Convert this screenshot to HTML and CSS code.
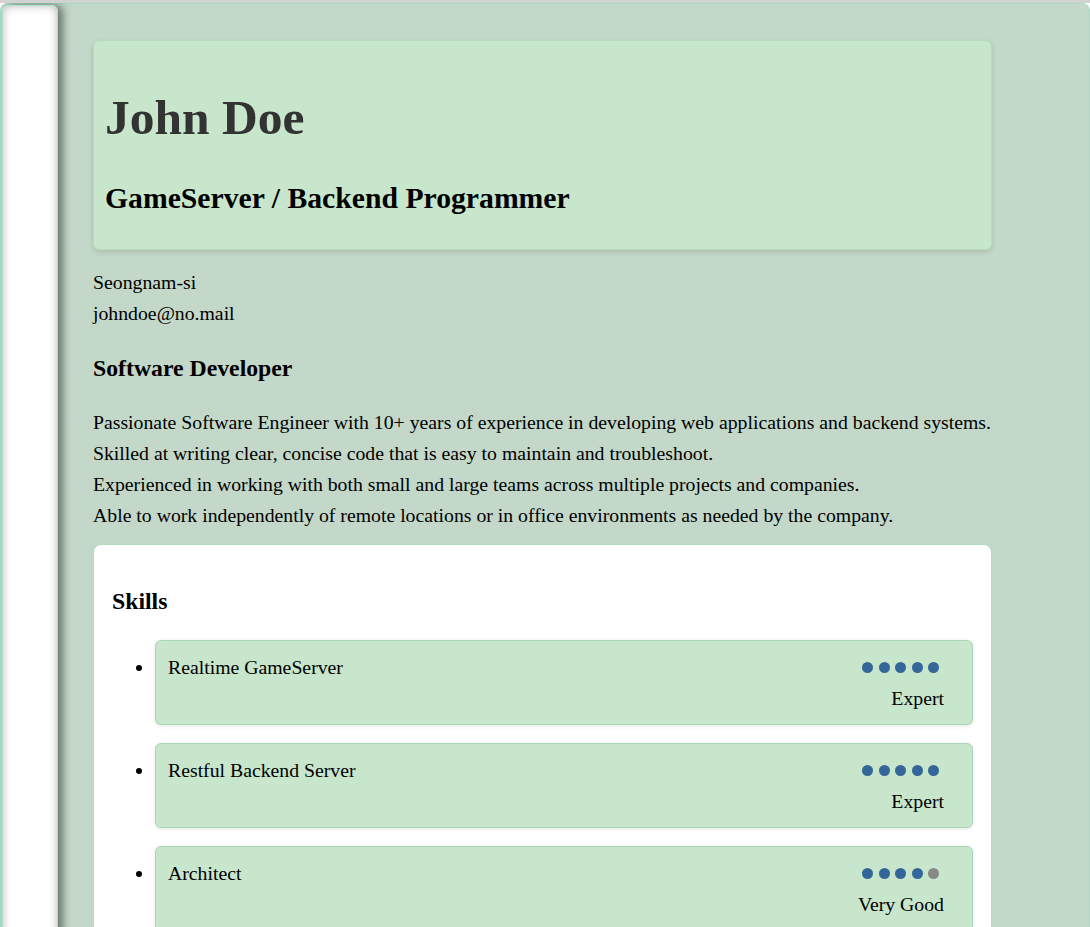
FILE: index.html
```html
<!DOCTYPE html>
<html lang="en">
<head>
<meta charset="utf-8">
<title>John Doe - Resume</title>
<link rel="stylesheet" href="styles.css">
</head>
<body>
<div class="app">
  <aside class="sidebar"></aside>
  <main class="content">
    <header class="hero">
      <h1 class="name">John Doe</h1>
      <h2 class="role">GameServer / Backend Programmer</h2>
    </header>
    <p class="contact">Seongnam-si<br>johndoe@no.mail</p>
    <h3 class="title">Software Developer</h3>
    <p class="summary">Passionate Software Engineer with 10+ years of experience in developing web applications and backend systems.<br>Skilled at writing clear, concise code that is easy to maintain and troubleshoot.<br>Experienced in working with both small and large teams across multiple projects and companies.<br>Able to work independently of remote locations or in office environments as needed by the company.</p>
    <section class="panel">
      <h3 class="panel-title">Skills</h3>
      <ul class="skills">
        <li class="skill">
          <div class="skill-row">
            <span class="skill-name">Realtime GameServer</span>
            <div class="skill-level">
              <div class="dots"><i class="dot on"></i><i class="dot on"></i><i class="dot on"></i><i class="dot on"></i><i class="dot on"></i></div>
              <div class="level">Expert</div>
            </div>
          </div>
        </li>
        <li class="skill">
          <div class="skill-row">
            <span class="skill-name">Restful Backend Server</span>
            <div class="skill-level">
              <div class="dots"><i class="dot on"></i><i class="dot on"></i><i class="dot on"></i><i class="dot on"></i><i class="dot on"></i></div>
              <div class="level">Expert</div>
            </div>
          </div>
        </li>
        <li class="skill">
          <div class="skill-row">
            <span class="skill-name">Architect</span>
            <div class="skill-level">
              <div class="dots"><i class="dot on"></i><i class="dot on"></i><i class="dot on"></i><i class="dot on"></i><i class="dot"></i></div>
              <div class="level">Very Good</div>
            </div>
          </div>
        </li>
        <li class="skill">
          <div class="skill-row">
            <span class="skill-name">Database</span>
            <div class="skill-level">
              <div class="dots"><i class="dot on"></i><i class="dot on"></i><i class="dot on"></i><i class="dot on"></i><i class="dot"></i></div>
              <div class="level">Very Good</div>
            </div>
          </div>
        </li>
      </ul>
    </section>
  </main>
</div>
</body>
</html>
```
FILE: styles.css
```css
html, body {
  margin: 0;
  padding: 0;
}
body {
  background: #ffffff;
  border-top: 3px solid #d2d2d2;
  font-family: "Liberation Serif", "Times New Roman", serif;
  font-size: 19.75px;
  line-height: 30.72px;
  color: #000;
  height: 924px;
  overflow: hidden;
}
.app {
  display: flex;
  align-items: flex-start;
  background: #c3d8c8;
  border: 1px solid #a6dcc3;
  border-bottom: none;
  border-radius: 8px 8px 0 0;
  min-height: 1200px;
}
.sidebar {
  flex: 0 0 54px;
  align-self: stretch;
  margin: 1px 0 0 1px;
  background: #ffffff;
  border: 1px solid #aee0cb;
  border-radius: 6px 6px 0 0;
  box-shadow: inset 0 0 9px rgba(0, 0, 0, 0.28), 5px 0 9px rgba(0, 0, 0, 0.45);
}
.content {
  width: 899px;
  margin-left: 35px;
  padding-top: 36px;
}
.hero {
  background: #c8e6cb;
  border: 1px solid #b6dcc0;
  border-radius: 6px;
  box-shadow: 0 2px 5px rgba(0, 0, 0, 0.13);
  padding: 12px 11px;
}
.name {
  font-size: 49.5px;
  line-height: normal;
  font-weight: bold;
  color: #333333;
  margin: 36px 0 36px;
}
.role {
  font-size: 29.7px;
  line-height: normal;
  font-weight: bold;
  margin: 0 0 22px;
}
.contact {
  margin: 17px 0 0;
}
.title {
  font-size: 23.76px;
  line-height: normal;
  margin: 27px 0 25px;
}
.summary {
  margin: 0 0 14px;
}
.panel {
  background: #ffffff;
  border: 1px solid #b2dcc0;
  border-radius: 8px;
  padding: 18px;
}
.panel-title {
  font-size: 23.76px;
  line-height: normal;
  margin: 25px 0 25px;
}
.skills {
  margin: 0;
  padding-left: 43px;
  list-style: disc;
}
.skill {
  background: #c8e6cb;
  border: 1px solid #a9d6b6;
  border-radius: 6px;
  box-shadow: 0 1px 4px rgba(0, 0, 0, 0.1);
  padding: 11px 28px 10px 12px;
  margin-bottom: 18.5px;
}
.skill-row {
  display: flex;
  justify-content: space-between;
  align-items: flex-start;
}
.skill-level {
  display: flex;
  flex-direction: column;
  align-items: flex-end;
}
.dots {
  display: flex;
  gap: 5.5px;
  height: 30.72px;
  align-items: center;
  margin-right: 5px;
}
.dot {
  display: block;
  width: 11px;
  height: 11px;
  border-radius: 50%;
  background: #888888;
}
.dot.on {
  background: #336699;
}
.level {
  text-align: right;
}
```
